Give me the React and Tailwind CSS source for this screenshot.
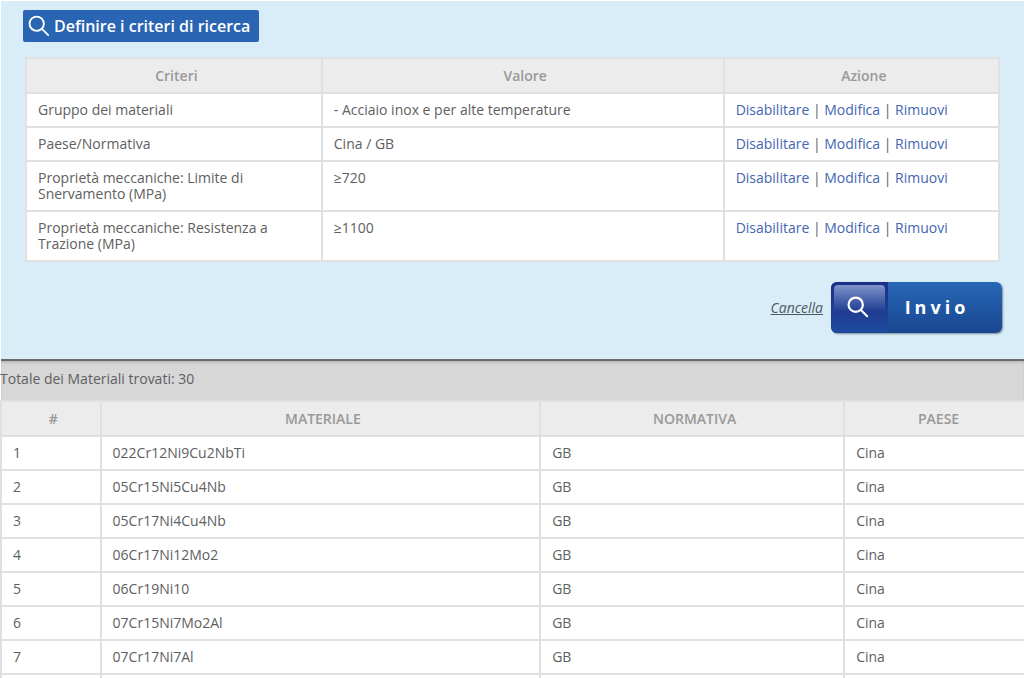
const criteria = [
  { name: "Gruppo dei materiali", value: "- Acciaio inox e per alte temperature" },
  { name: "Paese/Normativa", value: "Cina / GB" },
  { name: "Proprietà meccaniche: Limite di Snervamento (MPa)", value: "≥720" },
  { name: "Proprietà meccaniche: Resistenza a Trazione (MPa)", value: "≥1100" },
];

const materials = [
  "022Cr12Ni9Cu2NbTi",
  "05Cr15Ni5Cu4Nb",
  "05Cr17Ni4Cu4Nb",
  "06Cr17Ni12Mo2",
  "06Cr19Ni10",
  "07Cr15Ni7Mo2Al",
  "07Cr17Ni7Al",
];

function SearchIcon({ className, strokeWidth }) {
  return (
    <svg viewBox="0 0 24 24" fill="none" stroke="currentColor" strokeWidth={strokeWidth} strokeLinecap="round" className={className} aria-hidden="true">
      <circle cx="9.5" cy="9.5" r="7.8" />
      <path d="M15.2 15.2 22 22" />
    </svg>
  );
}

function HeadCell({ children }) {
  return <th scope="col" className="h-[35px] border-2 border-[#e0e0e0] bg-[#ececec] pr-[11px] pl-4 text-center font-semibold text-[#999]">{children}</th>;
}

function Cell({ children }) {
  return <td className="border-2 border-[#e0e0e0] bg-white px-[11px] py-2 align-top">{children}</td>;
}

function Action({ children }) {
  return <a href="#" className="text-[#4465b0]">{children}</a>;
}

export default function App() {
  return (
    <main className="h-screen overflow-hidden bg-white pt-px pl-px font-['Open_Sans','Noto_Sans',sans-serif] text-sm leading-4 text-[#606060]">
      <section className="border-b-2 border-[#666b6e] bg-[#d9edf8] pt-[9px] pr-6 pb-[26px] pl-6">
        <h1 className="-ml-0.5 inline-flex h-8 items-center gap-1 rounded-xs bg-[#2a65b3] pr-[9px] pl-[5px] text-base font-semibold text-white">
          <SearchIcon className="size-[22px]" strokeWidth={2} />
          Definire i criteri di ricerca
        </h1>
        <table className="mt-[15px] w-full table-fixed border-collapse">
          <colgroup>
            <col className="w-[30.4%]" />
            <col className="w-[41.3%]" />
            <col />
          </colgroup>
          <thead>
            <tr>
              <HeadCell>Criteri</HeadCell>
              <HeadCell>Valore</HeadCell>
              <HeadCell>Azione</HeadCell>
            </tr>
          </thead>
          <tbody>
            {criteria.map((c) => (
              <tr key={c.name}>
                <Cell>{c.name}</Cell>
                <Cell>{c.value}</Cell>
                <Cell>
                  <Action>Disabilitare</Action> | <Action>Modifica</Action> | <Action>Rimuovi</Action>
                </Cell>
              </tr>
            ))}
          </tbody>
        </table>
        <div className="mt-5 -mr-0.5 flex items-center justify-end gap-2">
          <a href="#" className="text-[#4d5a60] italic underline">Cancella</a>
          <button type="submit" className="flex h-[51px] w-[171px] items-stretch overflow-hidden rounded-md bg-linear-to-b from-[#2767b6] to-[#1a4691] text-white shadow-[1px_1px_2px_#7f8b96]">
            <span className="flex w-[57px] bg-linear-to-b from-[#1a2f88] to-[#1d4c9e] px-[3px] pt-[3px]">
              <span className="flex flex-1 items-center justify-center rounded-t-sm bg-linear-to-b from-[#8193c9] via-[#203c92] via-55% to-[#1d4c9e] pr-1 pb-1">
                <SearchIcon className="size-[22px]" strokeWidth={2.4} />
              </span>
            </span>
            <span className="flex flex-1 items-center justify-center pr-4 pb-0.5 text-lg font-bold tracking-[4px]">Invio</span>
          </button>
        </div>
      </section>
      <section className="bg-[#d7d7d7] pt-2.5 shadow-[inset_0_2px_2px_#bdbdbd]">
        <p className="-ml-px">Totale dei Materiali trovati: 30</p>
        <table className="mt-[13px] -ml-px w-[calc(100%+6px)] table-fixed border-collapse">
          <colgroup>
            <col className="w-[9.7%]" />
            <col className="w-[42.8%]" />
            <col className="w-[29.6%]" />
            <col />
          </colgroup>
          <thead>
            <tr>
              <HeadCell>#</HeadCell>
              <HeadCell>MATERIALE</HeadCell>
              <HeadCell>NORMATIVA</HeadCell>
              <HeadCell>PAESE</HeadCell>
            </tr>
          </thead>
          <tbody>
            {materials.map((m, i) => (
              <tr key={m}>
                <Cell>{i + 1}</Cell>
                <Cell>{m}</Cell>
                <Cell>GB</Cell>
                <Cell>Cina</Cell>
              </tr>
            ))}
            <tr>
              <Cell />
              <Cell />
              <Cell />
              <Cell />
            </tr>
          </tbody>
        </table>
      </section>
    </main>
  );
}
